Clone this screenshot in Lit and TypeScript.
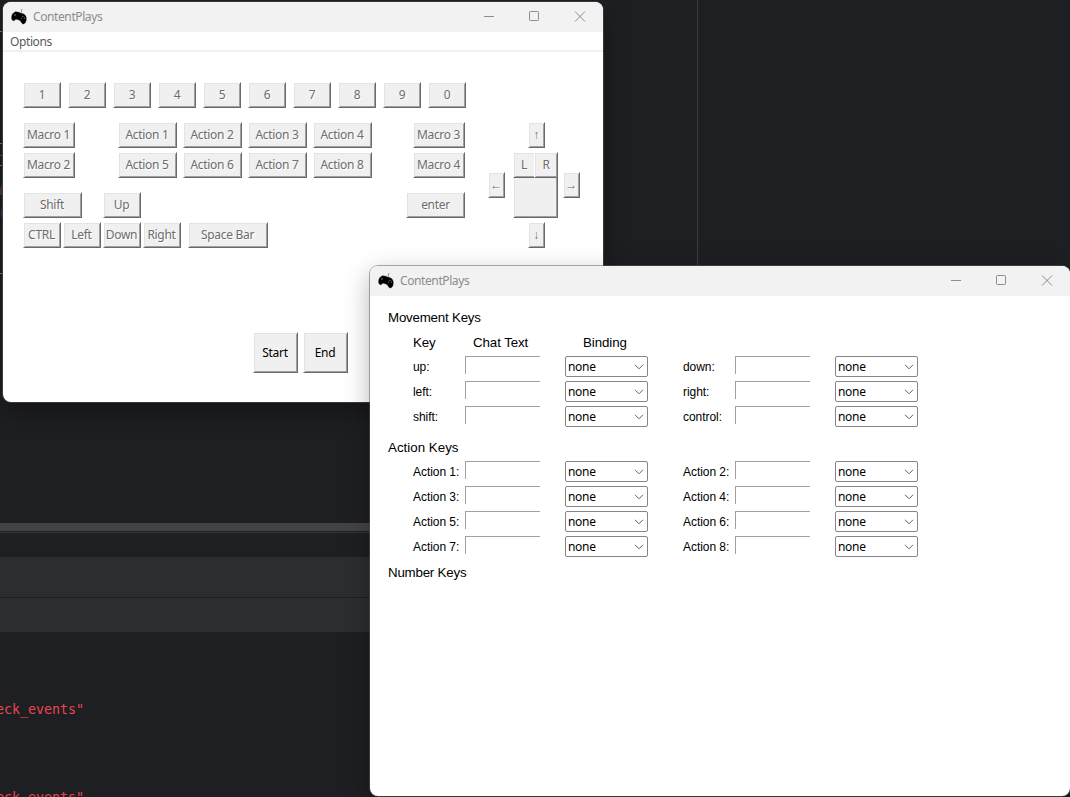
import { LitElement, html, css } from "lit";
import { customElement, property } from "lit/decorators.js";

@customElement("tk-button")
class TkButton extends LitElement {
  @property() label = "";

  static styles = css`
    :host {
      display: block;
      box-sizing: border-box;
      width: 38px;
      height: 26px;
      flex: none;
      background: #f0f0f0;
      border: 1px solid;
      border-color: #fff #696969 #696969 #fff;
      box-shadow: inset 1px 1px #e3e3e3, inset -1px -1px #a0a0a0;
      color: #6d6d6d;
      text-shadow: 1px 1px #fff;
    }
    .face {
      display: flex;
      align-items: center;
      justify-content: center;
      height: 100%;
      padding-right: var(--nudge, 1px);
      white-space: nowrap;
      font: 12px/16px "Noto Sans", "Open Sans", sans-serif;
      letter-spacing: -0.3px;
    }
  `;

  render() {
    return html`<div class="face">${this.label}</div>`;
  }
}

@customElement("app-window")
class AppWindow extends LitElement {
  @property() caption = "";

  static styles = css`
    :host {
      display: flex;
      flex-direction: column;
      box-sizing: border-box;
      background: #fff;
      border-radius: 8px;
      overflow: hidden;
    }
    .bar {
      display: flex;
      align-items: center;
      height: 30px;
      flex: none;
      background: #f2f2f2;
    }
    .icon {
      width: 16px;
      height: 16px;
      margin-left: 8px;
      margin-top: -1px;
    }
    .caption {
      flex: 1;
      margin-left: 6px;
      font: 12px/16px "Noto Sans", "Open Sans", sans-serif;
      letter-spacing: -0.4px;
      color: #8c8c8c;
    }
    .controls {
      display: flex;
      height: 30px;
    }
    .controls svg {
      width: 46px;
      height: 30px;
    }
    .line {
      fill: none;
      stroke: #8e8e8e;
      stroke-width: 1;
    }
  `;

  render() {
    return html`
      <div class="bar">
        <svg class="icon" viewBox="0 0 16 16">
          <path d="M10.3 4.6V2.2L11 0" fill="none" stroke="#777" stroke-width=".8" />
          <path
            d="M3.4 3.4C4.6 2.5 6 2.9 7 3.3C8.2 3.2 9 3.8 10.2 4.6C12.6 4.4 14.6 6 15.1 8.2C15.6 10.6 15 13.6 13.4 14.6C12 15.4 10.8 14.6 10.2 13C9.6 11.8 8.6 11.2 7.4 10.8C6 10.4 5.2 10 4.4 10.6C3.6 11.4 2.8 12 1.8 11.4C.6 10.6 .4 8.8 .8 7C1.2 5.2 2.2 4 3.4 3.4Z"
            fill="#000"
            stroke="#000"
            stroke-width=".4"
          />
          <circle cx="4" cy="6" r=".7" fill="#aaa" />
          <circle cx="11.9" cy="7.2" r=".5" fill="#ddd" />
          <circle cx="13.4" cy="9" r=".5" fill="#bbb" />
          <circle cx="10.7" cy="9.2" r=".5" fill="#999" />
        </svg>
        <div class="caption">${this.caption}</div>
        <div class="controls">
          <svg viewBox="0 0 46 30"><path class="line" d="M19 14.5H29" /></svg>
          <svg viewBox="0 0 46 30">
            <rect class="line" x="18.5" y="9.5" width="9" height="9" rx=".8" />
          </svg>
          <svg viewBox="0 0 46 30"><path class="line" d="M18 9.5L28 19.5M28 9.5L18 19.5" /></svg>
        </div>
      </div>
      <slot></slot>
    `;
  }
}

@customElement("key-row")
class KeyRow extends LitElement {
  @property({ attribute: false }) keys: string[] = [];

  static styles = css`
    :host {
      display: grid;
      grid-template-columns: 52px 100px 118px 52px 100px 83px;
      height: 25px;
      padding: 2px 0 0 25px;
      box-sizing: border-box;
    }
    .name {
      font: 12px/23px "Liberation Sans", Arial, sans-serif;
      letter-spacing: -0.05px;
      color: #000;
      white-space: nowrap;
    }
    .entry {
      width: 75px;
      height: 18px;
      box-sizing: border-box;
      border-top: 1px solid #a0a0a0;
      border-left: 1px solid #a0a0a0;
    }
    .combo {
      display: flex;
      align-items: center;
      justify-content: space-between;
      width: 83px;
      height: 21px;
      box-sizing: border-box;
      border: 1px solid #868686;
      border-radius: 2px;
      padding: 0 3px 0 2px;
      font: 12px/19px "Noto Sans", "Open Sans", sans-serif;
      letter-spacing: -0.3px;
      color: #000;
    }
    .combo svg {
      width: 10px;
      height: 6px;
    }
    .chevron {
      fill: none;
      stroke: #606060;
      stroke-width: 1;
    }
  `;

  render() {
    return this.keys.map(
      (k) => html`
        <div class="name">${k}:</div>
        <div class="entry"></div>
        <div class="combo">
          <span>none</span>
          <svg viewBox="0 0 10 6"><path class="chevron" d="M1 .8L5 4.8L9 .8" /></svg>
        </div>
      `
    );
  }
}

@customElement("app-root")
class AppRoot extends LitElement {
  static styles = css`
    :host {
      display: block;
      position: relative;
      width: 1070px;
      height: 797px;
      overflow: hidden;
      background: #1e1f22;
    }
    .editor {
      display: flex;
      flex-direction: column;
      height: 797px;
    }
    .pane {
      width: 698px;
      height: 523px;
      flex: none;
      box-sizing: border-box;
      border-right: 1px solid #393b40;
    }
    .marks {
      display: block;
      width: 3px;
      height: 300px;
    }
    .splitter {
      height: 8px;
      background: #434345;
      border-bottom: 1px solid #1e1f22;
      flex: none;
    }
    .edge {
      height: 1px;
      background: #2f3a3d;
      flex: none;
    }
    .tabs {
      margin-top: 24px;
      height: 40px;
      background: #2b2d30;
      border-bottom: 1px solid #1e1f22;
      flex: none;
    }
    .tools {
      height: 34px;
      background: #2b2d30;
      flex: none;
    }
    .log {
      margin-top: 69px;
      margin-left: -4px;
      font: 13.3px/18px "DejaVu Sans Mono", monospace;
      color: #e8464e;
    }
    .entry {
      height: 88px;
    }
    .main {
      position: absolute;
      left: 3px;
      top: 2px;
      width: 600px;
      height: 400px;
      box-shadow: 0 0 0 1px #38383a, 0 10px 26px rgba(0, 0, 0, 0.35);
    }
    .binds {
      position: absolute;
      left: 370px;
      top: 266px;
      width: 700px;
      height: 530px;
      box-shadow: 0 0 0 1px rgba(90, 90, 92, 0.5), 0 8px 26px rgba(0, 0, 0, 0.3);
    }
    .menu {
      height: 18px;
      flex: none;
      padding-left: 7px;
      border-bottom: 2px solid #f0f0f0;
      font: 12px/20px "Noto Sans", "Open Sans", sans-serif;
      letter-spacing: -0.4px;
      color: #5a5a5a;
    }
    .pad {
      display: flex;
      padding: 30px 0 0 20px;
    }
    .board {
      width: 443px;
      flex: none;
    }
    .row {
      display: flex;
      height: 30px;
    }
    .digits {
      gap: 7px;
      height: 40px;
      --nudge: 0px;
    }
    .gapped {
      height: 40px;
    }
    .actions {
      display: flex;
      gap: 6px;
      margin: 0 41px 0 43px;
    }
    .w52 {
      width: 52px;
    }
    .w59 {
      width: 59px;
    }
    .bottom {
      gap: 2px;
    }
    .space {
      width: 80px;
      margin-left: 5px;
    }
    .up {
      margin-left: 21px;
    }
    .enter {
      margin-left: auto;
      margin-right: 1px;
      --nudge: 0px;
    }
    .mouse {
      display: grid;
      grid-template: 26px 66px 26px / 20px 45px 17px;
      gap: 4px 5px;
      margin: 40px 0 0 22px;
      align-items: center;
      justify-items: start;
      height: 126px;
    }
    .arrow {
      width: 17px;
    }
    .n,
    .s {
      grid-column: 1 / -1;
      margin-left: 40px;
    }
    .body {
      display: flex;
      flex-direction: column;
      width: 45px;
      height: 66px;
      box-sizing: border-box;
      background: #f0f0f0;
      border: 1px solid;
      border-color: #fff #696969 #696969 #fff;
      box-shadow: inset 1px 1px #e3e3e3, inset -1px -1px #a0a0a0;
    }
    .clicks {
      display: flex;
      margin: -1px;
    }
    .click {
      width: 24px;
      --nudge: 0px;
    }
    .click:first-child {
      width: 21px;
      border-right: 0;
      box-shadow: inset 1px 1px #e3e3e3, inset 0 -1px #a0a0a0;
      --nudge: 0px;
    }
    .run {
      display: flex;
      gap: 5px;
      padding: 80px 0 0 250px;
    }
    .big {
      width: 45px;
      height: 41px;
      color: #000;
      text-shadow: none;
    }
    .form {
      padding: 10px 0 0 18px;
      font: 13.3px/24px "Liberation Sans", Arial, sans-serif;
      letter-spacing: -0.2px;
      color: #000;
    }
    .heading {
      height: 24px;
    }
    .columns {
      display: grid;
      grid-template-columns: 60px 110px 100px;
      padding: 1px 0 0 25px;
      height: 23px;
      letter-spacing: -0.08px;
    }
    .second {
      margin-top: 7px;
      margin-bottom: -1px;
      letter-spacing: 0.03px;
    }
    .third {
      margin-top: 2px;
    }
  `;

  private btn(label: string, cls = "") {
    return html`<tk-button class=${cls} label=${label}></tk-button>`;
  }

  render() {
    const movement = [["up", "down"], ["left", "right"], ["shift", "control"]];
    const actions = [1, 3, 5, 7].map((n) => [`Action ${n}`, `Action ${n + 1}`]);
    return html`
      <div class="editor">
        <div class="pane">
          <svg class="marks" viewBox="0 0 3 300">
            <path d="M0 31.5H3M0 143.5H3M0 165.5H3" stroke="#6f7f90" />
            <path d="M0 155.5H3" stroke="#6b5540" />
            <path d="M.5 188V195" stroke="#8c2020" />
            <path d="M2 185V195M2 209V217" stroke="#3f6a94" />
            <path d="M0 273.5H2" stroke="#7d7f83" />
          </svg>
        </div>
        <div class="splitter"></div>
        <div class="edge"></div>
        <div class="tabs"></div>
        <div class="tools"></div>
        <div class="log">
          <div class="entry">eck_events"</div>
          <div class="entry">eck_events"</div>
        </div>
      </div>

      <app-window class="main" caption="ContentPlays">
        <div class="menu">Options</div>
        <div class="pad">
          <div class="board">
            <div class="row digits">${[..."1234567890"].map((d) => this.btn(d))}</div>
            <div class="row">
              ${this.btn("Macro 1", "w52")}
              <div class="actions">${[1, 2, 3, 4].map((n) => this.btn(`Action ${n}`, "w59"))}</div>
              ${this.btn("Macro 3", "w52")}
            </div>
            <div class="row gapped">
              ${this.btn("Macro 2", "w52")}
              <div class="actions">${[5, 6, 7, 8].map((n) => this.btn(`Action ${n}`, "w59"))}</div>
              ${this.btn("Macro 4", "w52")}
            </div>
            <div class="row">
              ${this.btn("Shift", "w59")} ${this.btn("Up", "up")} ${this.btn("enter", "w59 enter")}
            </div>
            <div class="row bottom">
              ${["CTRL", "Left", "Down", "Right"].map((k) => this.btn(k))}
              ${this.btn("Space Bar", "space")}
            </div>
          </div>
          <div class="mouse">
            ${this.btn("↑", "arrow n")}
            ${this.btn("←", "arrow")}
            <div class="body">
              <div class="clicks">${this.btn("L", "click")}${this.btn("R", "click")}</div>
            </div>
            ${this.btn("→", "arrow")}
            ${this.btn("↓", "arrow s")}
          </div>
        </div>
        <div class="run">${this.btn("Start", "big")}${this.btn("End", "big")}</div>
      </app-window>

      <app-window class="binds" caption="ContentPlays">
        <div class="form">
          <div class="heading">Movement Keys</div>
          <div class="columns"><span>Key</span><span>Chat Text</span><span>Binding</span></div>
          ${movement.map((k) => html`<key-row .keys=${k}></key-row>`)}
          <div class="heading second">Action Keys</div>
          ${actions.map((k) => html`<key-row .keys=${k}></key-row>`)}
          <div class="heading third">Number Keys</div>
        </div>
      </app-window>
    `;
  }
}
